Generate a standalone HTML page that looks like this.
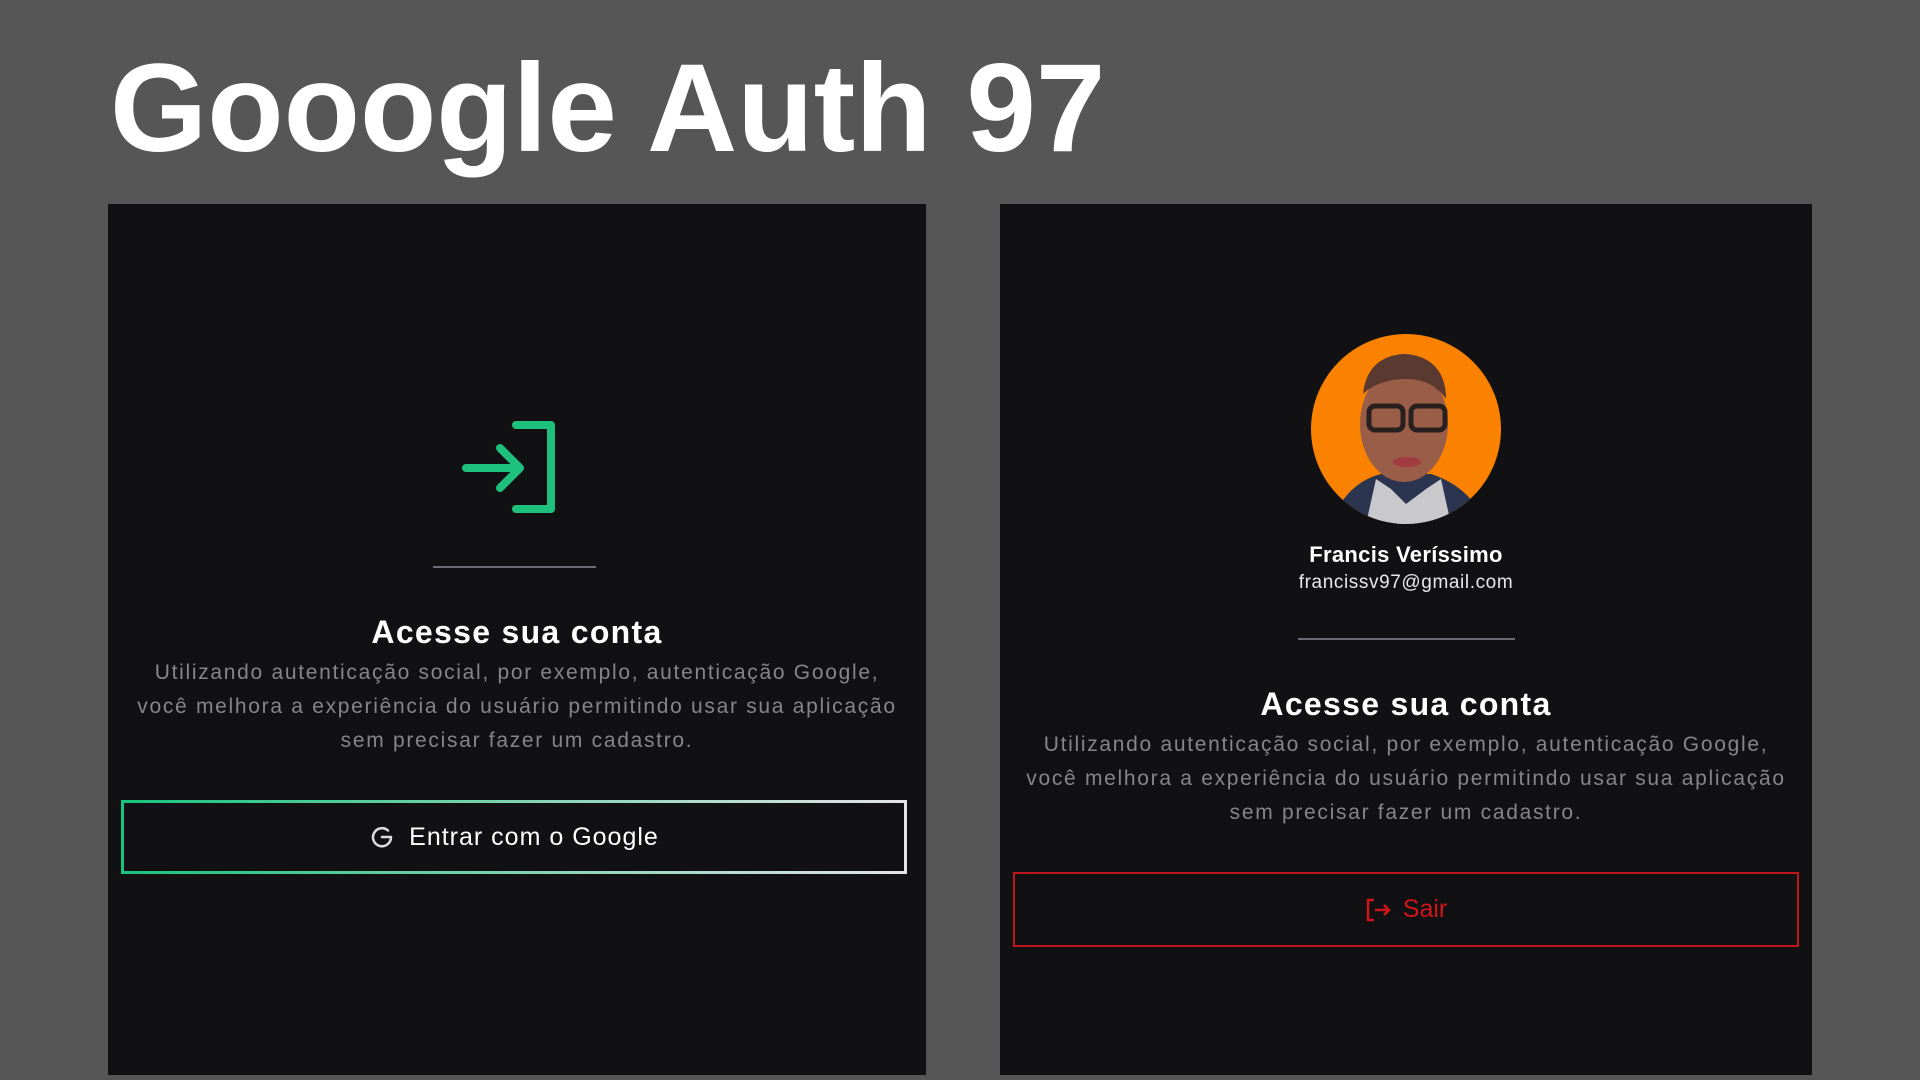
<!DOCTYPE html>
<html><head><meta charset="utf-8"><style>
*{margin:0;padding:0;box-sizing:border-box}
body{width:1920px;height:1080px;background:#565656;position:relative;overflow:hidden;font-family:"Liberation Sans",sans-serif}
.t{position:absolute;left:110px;top:34px;font-size:125px;font-weight:bold;color:#fff;letter-spacing:0px;line-height:150px}
.p{position:absolute;top:204px;height:871px;background:#111113}
.c{position:absolute;left:0;width:100%;text-align:center}
.h{font-size:32px;font-weight:bold;color:#fff;letter-spacing:1.3px}
.d{font-size:21px;color:#85858c;line-height:34px;letter-spacing:1.7px}
.hr{position:absolute;height:2px;background:#6c6c72}
</style></head><body>
<div class="t">Gooogle Auth 97</div>

<div class="p" style="left:108px;width:818px">
  <svg style="position:absolute;left:354px;top:217px" width="96" height="92" viewBox="0 0 96 92">
    <path d="M54 4H89V88H54" fill="none" stroke="#1dc07d" stroke-width="8" stroke-linejoin="round" stroke-linecap="round"/>
    <path d="M4 47H58M38 27L58 47L38 67" fill="none" stroke="#1dc07d" stroke-width="8" stroke-linejoin="round" stroke-linecap="round"/>
  </svg>
  <div class="hr" style="left:325px;width:163px;top:362px"></div>
  <div class="c h" style="top:410px">Acesse sua conta</div>
  <div class="c d" style="top:452px">Utilizando autenticação social, por exemplo, autenticação Google,<br>você melhora a experiência do usuário permitindo usar sua aplicação<br>sem precisar fazer um cadastro.</div>
  <div style="position:absolute;left:13px;top:596px;width:786px;height:74px;border:3px solid;border-image:linear-gradient(90deg,#19c37f,#e4e4e4) 1;display:flex;align-items:center;justify-content:center;color:#fff;font-size:25px;letter-spacing:1px">
    <svg width="26" height="26" viewBox="0 0 26 26" style="margin-right:14px"><path d="M22 13H13M22 13A9 9 0 1 1 19 6.5" fill="none" stroke="#ddd" stroke-width="2.5" stroke-linecap="round"/></svg>Entrar com o Google
  </div>
</div>

<div class="p" style="left:1000px;width:812px">
  <svg style="position:absolute;left:311px;top:130px" width="190" height="190" viewBox="0 0 190 190">
    <defs><clipPath id="cc"><circle cx="95" cy="95" r="95"/></clipPath></defs>
    <g clip-path="url(#cc)">
      <rect width="190" height="190" fill="#fb8200"/>
      <path d="M20 190C30 160 50 145 70 140L120 140C145 148 165 165 175 190Z" fill="#2b3550"/>
      <path d="M55 190L65 145L80 155L95 170L115 155L130 145L140 190Z" fill="#c9c9cc"/>
      <ellipse cx="93" cy="90" rx="44" ry="58" fill="#9a5e48"/>
      <path d="M52 60C55 30 75 20 95 20C118 22 135 35 135 65C125 50 110 45 95 45C75 45 60 52 52 60Z" fill="#5a3a30"/>
      <rect x="58" y="72" width="34" height="24" rx="6" fill="none" stroke="#2a2020" stroke-width="5"/>
      <rect x="100" y="72" width="34" height="24" rx="6" fill="none" stroke="#2a2020" stroke-width="5"/>
      <ellipse cx="96" cy="128" rx="14" ry="5" fill="#a23c40"/>
    </g>
  </svg>
  <div class="c" style="top:338px;font-size:22px;font-weight:bold;color:#fff;letter-spacing:0.3px">Francis Veríssimo</div>
  <div class="c" style="top:368px;font-size:19px;color:#e8e8e8;letter-spacing:0.6px">francissv97@gmail.com</div>
  <div class="hr" style="left:298px;width:217px;top:434px"></div>
  <div class="c h" style="top:482px">Acesse sua conta</div>
  <div class="c d" style="top:524px">Utilizando autenticação social, por exemplo, autenticação Google,<br>você melhora a experiência do usuário permitindo usar sua aplicação<br>sem precisar fazer um cadastro.</div>
  <div style="position:absolute;left:13px;top:668px;width:786px;height:75px;border:2px solid #c0141c;display:flex;align-items:center;justify-content:center;color:#d0141c;font-size:25px">
    <svg width="28" height="26" viewBox="0 0 28 26" style="margin-right:10px"><path d="M9 3H3V23H9M10 13H24M19 8L24 13L19 18" fill="none" stroke="#d0141c" stroke-width="2.5"/></svg>Sair
  </div>
</div>
</body></html>
